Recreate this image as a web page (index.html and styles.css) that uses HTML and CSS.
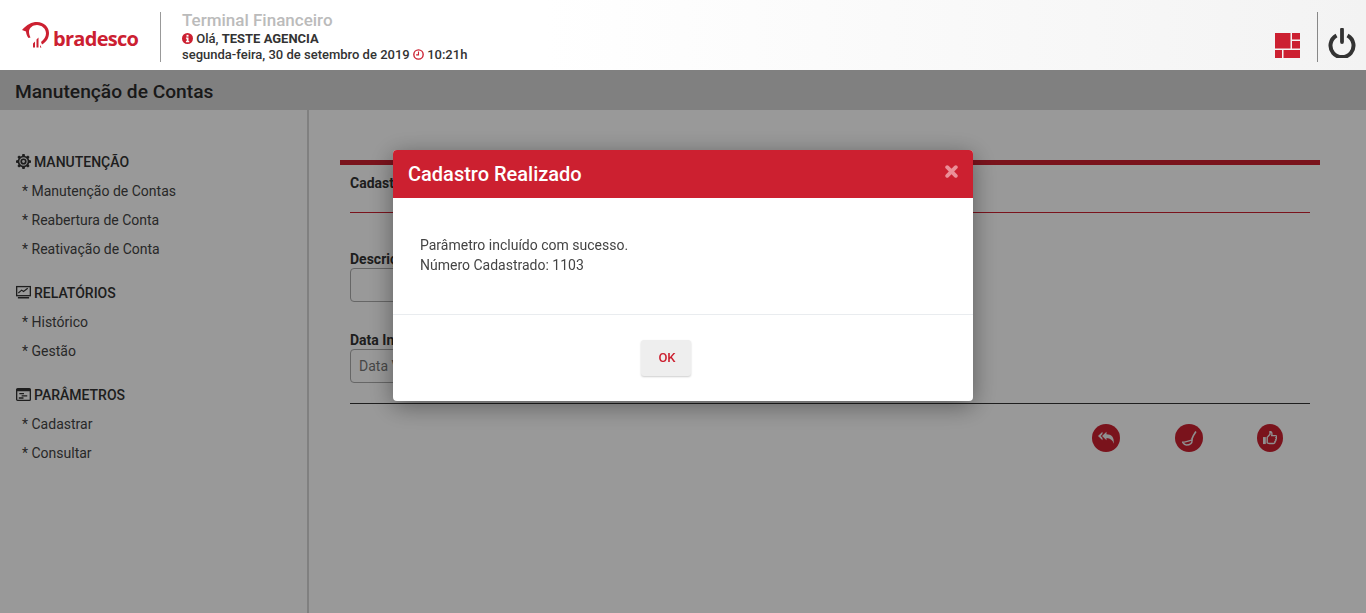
FILE: index.html
```html
<!DOCTYPE html>
<html lang="pt-BR">
<head>
<meta charset="UTF-8">
<meta name="viewport" content="width=device-width, initial-scale=1.0">
<title>Terminal Financeiro</title>
<link rel="stylesheet" href="styles.css">
</head>
<body>

<header class="topo">
    <div class="logo">
        <svg class="logo-arvore" width="30" height="28" viewBox="0 0 30 28">
            <path d="M0 9C5 3.500 9.500 1 15 1C22 1 27 6 27 12C27 17 24.500 21 20 23.500L19 21C22 18.500 24 15.500 24 12.500C24 7.500 19.500 4 15 4C10.500 4 7.500 7 7 10C6.800 12 7.500 14.500 8.500 16.500L6.500 17C5 15 4 12.500 4 10.500Z" fill="#cc2031"/>
            <path d="M11 26.500V22.500L13 20.500V26.500ZM14.500 26.500V18.500L16.500 16.500V26.500ZM18 26.500V24L19.500 26.500Z" fill="#cc2031"/>
        </svg>
        <span class="logo-texto">bradesco</span>
    </div>
    <div class="saudacao">
        <div class="sistema">Terminal Financeiro</div>
        <div class="linha-info">
            <svg width="11" height="11" viewBox="0 0 12 12"><circle cx="6" cy="6" r="6" fill="#cc2031"/><rect x="4.900" y="2" width="2.200" height="2" fill="#fff"/><path d="M4.300 5h2.800v3.800h.8V10H4.300V8.800h.8V6.200h-.8Z" fill="#fff"/></svg>
            Olá, <strong>TESTE AGENCIA</strong>
        </div>
        <div class="linha-info linha-data">
            segunda-feira, 30 de setembro de 2019
            <svg width="11" height="11" viewBox="0 0 12 12"><circle cx="6" cy="6" r="5.100" fill="none" stroke="#cc2031" stroke-width="1.500"/><path d="M6 2.800V6.400H3.400" fill="none" stroke="#cc2031" stroke-width="1.200"/></svg>
            10:21h
        </div>
    </div>
    <div class="topo-acoes">
        <svg class="icone-grade" width="25" height="25" viewBox="0 0 25 25">
            <path d="M0 0H15.500V15.500H0ZM17 0H25V6.500H17ZM17 8H25V15.500H17ZM0 17H7V25H0ZM8.500 17H25V25H8.500Z" fill="#cc2031"/>
        </svg>
        <div class="sair">
            <svg width="28" height="30" viewBox="0 0 28 30">
                <path d="M8.500 7.500A11.500 11.500 0 1 0 19.500 7.500" fill="none" stroke="#333" stroke-width="4"/>
                <path d="M14 1.500V14" stroke="#333" stroke-width="3.800" stroke-linecap="round"/>
            </svg>
        </div>
    </div>
</header>

<div class="titulo-pagina">Manutenção de Contas</div>

<div class="conteudo">
    <nav class="menu">
        <div class="menu-grupo">
            <div class="menu-titulo">
                <svg width="15" height="15" viewBox="0 0 16 16"><path d="M6.800 0h2.400l.4 2 1.500.6 1.700-1.100 1.700 1.700-1.100 1.700.6 1.500 2 .4v2.400l-2 .4-.6 1.500 1.100 1.700-1.700 1.700-1.700-1.100-1.500.6-.4 2H6.800l-.4-2-1.500-.6-1.700 1.100-1.700-1.700 1.100-1.700-.6-1.500-2-.4V6.800l2-.4.6-1.500-1.100-1.700 1.700-1.700 1.700 1.100 1.500-.6Z" fill="#333"/><circle cx="8" cy="8" r="3.900" fill="none" stroke="#eee" stroke-width="1.200"/><circle cx="8" cy="8" r="1.500" fill="#eee"/></svg>
                MANUTENÇÃO
            </div>
            <a class="menu-item">* Manutenção de Contas</a>
            <a class="menu-item">* Reabertura de Conta</a>
            <a class="menu-item">* Reativação de Conta</a>
        </div>
        <div class="menu-grupo">
            <div class="menu-titulo">
                <svg width="15" height="15" viewBox="0 0 16 16"><rect x=".7" y="1.700" width="14.600" height="9.700" fill="none" stroke="#333" stroke-width="1.400"/><path d="M2.500 8.500L6 5.500L8 7L12.500 3.500" fill="none" stroke="#333" stroke-width="1.200"/><path d="M2 12.800h12v1.600H2Z" fill="#333"/></svg>
                RELATÓRIOS
            </div>
            <a class="menu-item">* Histórico</a>
            <a class="menu-item">* Gestão</a>
        </div>
        <div class="menu-grupo">
            <div class="menu-titulo">
                <svg width="15" height="15" viewBox="0 0 16 16"><rect x=".7" y="1.700" width="14.600" height="12.600" rx="1" fill="none" stroke="#333" stroke-width="1.400"/><path d="M1 2h14v2.400H1ZM3.500 6.500h5v1.200h-5ZM6 8.800h6v1.200H6ZM3 11h5v1.400H3Z" fill="#333"/></svg>
                PARÂMETROS
            </div>
            <a class="menu-item">* Cadastrar</a>
            <a class="menu-item">* Consultar</a>
        </div>
    </nav>

    <main class="principal">
        <div class="painel">
            <div class="painel-titulo">Cadastro de Parâmetros</div>
            <div class="campo campo-primeiro">
                <label class="campo-rotulo">Descrição</label>
                <div class="campo-entrada"></div>
            </div>
            <div class="campo">
                <label class="campo-rotulo">Data Início</label>
                <div class="campo-entrada">Data Vigência</div>
            </div>
            <div class="botoes">
                <span class="botao-redondo">
                    <svg width="17" height="14" viewBox="0 0 19 15"><path d="M5 0.500V3L3 5.200L5 7.500V10L0 5.200ZM9.500 0.500V3.200C15 3.200 18.500 6.500 17.500 14C16.500 10 14 8 9.500 7.600V10L4.500 5.200Z" fill="#eee"/></svg>
                </span>
                <span class="botao-redondo">
                    <svg width="15" height="15" viewBox="0 0 14 14"><path d="M13 0.500L10.500 4.500L9 8" fill="none" stroke="#eee" stroke-width="1.500"/><path d="M0.500 10.500C3 10.500 6 9.500 9.500 8.300C9.500 11 7.500 13 4 13C2.500 13 1.500 12 0.500 10.500Z" fill="none" stroke="#eee" stroke-width="1.300"/></svg>
                </span>
                <span class="botao-redondo botao-estreito">
                    <svg width="14" height="14" viewBox="0 0 15 15"><path d="M0 6.500H3V14H0Z" fill="#eee"/><path d="M4.500 6.800L7.500 3.500V0.600C9.300 0.600 10 2.300 9.300 5H13.500C14.800 5 14.900 6.600 14 7C14.600 7.800 14.400 8.900 13.600 9.200C14 10.100 13.600 11 12.800 11.200C13 12.400 12.400 13.400 11 13.400H7C5.800 13.400 5.200 13 4.500 12.600Z" fill="none" stroke="#eee" stroke-width="1.500"/></svg>
                </span>
            </div>
        </div>
    </main>
</div>

<div class="fundo-modal"></div>

<div class="modal">
    <div class="modal-topo">
        <span class="modal-titulo">Cadastro Realizado</span>
        <svg class="modal-fechar" width="13" height="13" viewBox="0 0 13 13"><path d="M2.200 2.200L10.800 10.800M10.800 2.200L2.200 10.800" stroke="#eb8f98" stroke-width="3.800" stroke-linecap="round"/></svg>
    </div>
    <div class="modal-corpo">
        Parâmetro incluído com sucesso.<br>
        Número Cadastrado: 1103
    </div>
    <div class="modal-rodape">
        <button class="botao-ok">OK</button>
    </div>
</div>

</body>
</html>
```

FILE: styles.css
```css
* {
    box-sizing: border-box;
}

html, body {
    height: 100%;
}

body {
    display: flex;
    flex-direction: column;
    margin: 0;
    overflow: hidden;
    background-color: #fff;
    color: #333;
    font-family: Roboto, "Liberation Sans", sans-serif;
}

.topo {
    position: relative;
    z-index: 20;
    display: flex;
    align-items: flex-start;
    flex: 0 0 70px;
    padding: 12px 10px 0 22px;
    background: linear-gradient(to right, #fff 40%, #f3f3f3 100%);
}

.logo {
    display: flex;
    align-items: flex-end;
    width: 139px;
    height: 50px;
    padding-bottom: 13px;
    border-right: 1px solid #999;
}

.logo-arvore {
    margin-right: 1px;
}

.logo-texto {
    color: #cc2031;
    font-family: "Open Sans", sans-serif;
    font-size: 20px;
    font-weight: 700;
    line-height: 20px;
    letter-spacing: -0.7px;
}

.saudacao {
    padding-left: 21px;
}

.sistema {
    color: #bbb;
    font-size: 17px;
    font-weight: 500;
    line-height: 17px;
}

.linha-info {
    margin-top: 2px;
    font-size: 13px;
    font-weight: 500;
    line-height: 16px;
    color: #333;
}

.linha-data {
    margin-top: 0;
}

.linha-info svg {
    vertical-align: -1px;
}

.linha-info strong {
    font-weight: 700;
}

.topo-acoes {
    display: flex;
    align-items: flex-start;
    margin-left: auto;
}

.icone-grade {
    margin-top: 21px;
    margin-right: 17px;
}

.sair {
    width: 39px;
    height: 50px;
    padding: 16px 0 0 10px;
    border-left: 1px solid #888;
}

.titulo-pagina {
    display: flex;
    align-items: center;
    flex: 0 0 40px;
    padding: 3px 0 0 15px;
    background-color: #d5d5d5;
    color: #2a2a2a;
    font-size: 19.200px;
    font-weight: 500;
    line-height: 20px;
}

.conteudo {
    display: flex;
    flex: 1;
}

.menu {
    flex: 0 0 309px;
    padding-top: 41px;
    border-right: 2px solid #d5d5d5;
}

.menu-grupo {
    margin-bottom: 18px;
}

.menu-titulo {
    display: flex;
    align-items: center;
    gap: 3px;
    height: 21px;
    padding-left: 16px;
    font-size: 14px;
    font-weight: 500;
    color: #333;
}

.menu-item {
    display: block;
    height: 29px;
    padding-left: 22px;
    font-size: 14px;
    line-height: 29px;
    color: #444;
}

.menu-titulo + .menu-item {
    margin-top: 5px;
}

.principal {
    flex: 1;
    padding: 50px 46px 0 31px;
}

.painel {
    padding: 0 10px;
    border-top: 5px solid #cc2030;
}

.painel-titulo {
    height: 48px;
    padding-top: 10px;
    margin-bottom: 38px;
    border-bottom: 1px solid #cc2030;
    font-size: 14px;
    font-weight: 700;
    line-height: 16px;
}

.campo {
    margin-bottom: 20px;
}

.campo-primeiro {
    margin-bottom: 30px;
}

.campo-rotulo {
    display: block;
    margin-bottom: 1px;
    font-size: 14px;
    font-weight: 700;
    line-height: 16px;
}

.campo-entrada {
    width: 300px;
    height: 34px;
    padding: 0 8px;
    border: 1px solid #aaa;
    border-radius: 4px;
    background-color: #fff;
    font-size: 14px;
    line-height: 33px;
    color: #777;
}

.botoes {
    display: flex;
    justify-content: flex-end;
    align-items: flex-start;
    gap: 55px;
    padding: 20px 27px 0 0;
    border-top: 1px solid #333;
}

.botao-redondo {
    display: flex;
    align-items: center;
    justify-content: center;
    width: 28px;
    height: 28px;
    border-radius: 50%;
    background-color: #cc2030;
}

.botao-estreito {
    width: 26px;
    margin-left: -1px;
}

.fundo-modal {
    position: fixed;
    top: 70px;
    right: 0;
    bottom: 0;
    left: 0;
    z-index: 10;
    background-color: rgba(0, 0, 0, 0.4);
}

.modal {
    position: fixed;
    top: 150px;
    left: 393px;
    z-index: 30;
    width: 580px;
    height: 251px;
    border-radius: 4px;
    background-color: #fff;
    box-shadow: 0 5px 24px rgba(0, 0, 0, 0.4);
}

.modal-topo {
    display: flex;
    align-items: center;
    justify-content: space-between;
    height: 48px;
    padding: 0 15px;
    border-radius: 4px 4px 0 0;
    background-color: #cc2030;
}

.modal-titulo {
    color: #fff;
    font-size: 20px;
    font-weight: 500;
}

.modal-fechar {
    margin-top: -5px;
}

.modal-corpo {
    height: 117px;
    padding: 37px 27px 0;
    border-bottom: 1px solid #e9ecef;
    font-size: 14px;
    line-height: 20px;
    color: #444;
}

.modal-rodape {
    display: flex;
    padding: 25px 0 0 248px;
}

.botao-ok {
    width: 50px;
    height: 36px;
    padding: 0 0 2px 2px;
    border: 0;
    border-radius: 3px;
    background-color: #eee;
    box-shadow: 0 1px 2px rgba(0, 0, 0, 0.2);
    color: #cc2030;
    font-family: Roboto, sans-serif;
    font-size: 13px;
    font-weight: 500;
}
```
